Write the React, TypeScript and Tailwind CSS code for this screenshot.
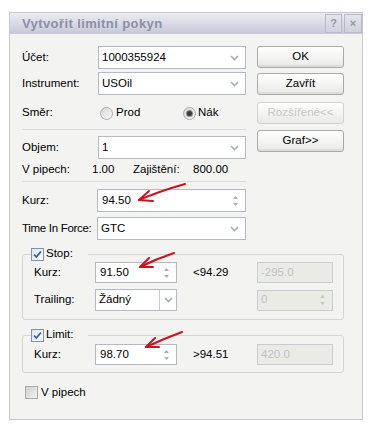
import React from "react";

function Chevron() {
  return (
    <svg width="9" height="6" viewBox="0 0 9 6">
      <path d="M1 1l3.5 3.5L8 1" fill="none" stroke="#a4abb4" strokeWidth="1.6" />
    </svg>
  );
}

function SpinArrows({ color = "#a8aeb6" }: { color?: string }) {
  return (
    <div className="flex flex-col items-center gap-[4px]">
      <svg width="5" height="3" viewBox="0 0 5 3">
        <path d="M0 3h5L2.5 0z" fill={color} />
      </svg>
      <svg width="5" height="3" viewBox="0 0 5 3">
        <path d="M0 0h5L2.5 3z" fill={color} />
      </svg>
    </div>
  );
}

function Combo({ value, className = "" }: { value: string; className?: string }) {
  return (
    <div className={`h-[23px] w-[148px] border border-[#b4bac3] bg-white flex items-center justify-between pl-[3px] pr-[6px] ${className}`}>
      <span>{value}</span>
      <Chevron />
    </div>
  );
}

function Spin({ value, w, h = 23 }: { value: string; w: string; h?: number }) {
  return (
    <div
      className={`${w} ${h === 23 ? "h-[23px]" : "h-[21px]"} border border-[#b4bac3] bg-white flex items-center justify-between pl-[4px] pr-[7px]`}
    >
      <span>{value}</span>
      <SpinArrows />
    </div>
  );
}

function Disabled({ value, spin = false }: { value: string; spin?: boolean }) {
  return (
    <div className="w-[76px] h-[21px] border border-[#c6ccd3] bg-[#ebebe6] flex items-center justify-between pl-[3px] pr-[7px] text-[#bfc2c6]">
      <span>{value}</span>
      {spin && <SpinArrows color="#c4c8cc" />}
    </div>
  );
}

function Button({ label, disabled = false }: { label: string; disabled?: boolean }) {
  return (
    <div
      className={`w-[87px] h-[22px] rounded-[3px] border flex items-center justify-center bg-linear-to-b from-white to-[#e9e9e6] ${
        disabled ? "border-[#d2d2d0] text-[#c6c6c6]" : "border-[#a9a9a7] text-black shadow-[inset_0_-2px_0_#dcdcd8]"
      }`}
    >
      {label}
    </div>
  );
}

function Radio({ checked = false }: { checked?: boolean }) {
  return (
    <div className="w-[13px] h-[13px] rounded-full border border-[#a8acb0] bg-linear-to-br from-[#d6d6d6] to-[#fafafa] flex items-center justify-center">
      {checked && <div className="w-[5px] h-[5px] rounded-full bg-[#3a3a3a] shadow-[0_0_0_1px_#8a8a8a]" />}
    </div>
  );
}

function Check({ checked = true }: { checked?: boolean }) {
  return (
    <div
      className={`w-[13px] h-[13px] border flex items-center justify-center ${
        checked ? "border-[#7d93b0] bg-linear-to-br from-[#dfe3ea] to-white" : "border-[#a9a9a9] bg-linear-to-br from-[#d0d0d0] to-[#f2f2f2]"
      }`}
    >
      {checked && (
        <svg width="9" height="9" viewBox="0 0 9 9">
          <path d="M1 4.5l2.3 2.5L8 1.5" fill="none" stroke="#2d5fae" strokeWidth="1.8" />
        </svg>
      )}
    </div>
  );
}

function Separator() {
  return <div className="h-px w-[224px] bg-[#dcdcd6]" />;
}

function Arrows() {
  return (
    <svg className="absolute left-0 top-0 pointer-events-none" width="371" height="426" viewBox="0 0 371 426">
      <g fill="none" stroke="#c8141c" strokeWidth="2" strokeLinecap="round">
        <path d="M185 184 Q160 191 139 200" />
        <path d="M139 200 L153 201 M139 200 L149 191" />
        <path d="M174 253 Q156 259 140 267" />
        <path d="M140 267 L153 267 M140 267 L149 258" />
        <path d="M182 332 Q163 339 146 347" />
        <path d="M146 347 L159 347 M146 347 L155 338" />
      </g>
    </svg>
  );
}

export default function App() {
  return (
    <div className="relative w-[371px] h-[426px] bg-white overflow-hidden font-['Liberation_Sans',Arial,sans-serif] text-[11.5px] text-black leading-none whitespace-nowrap">
      <div className="ml-[9px] mt-[12px] w-[354px] border border-[#c7c7c7] bg-[#f3f3f1]">
        {/* title bar */}
        <div className="h-[21px] flex items-center justify-between bg-linear-to-b from-[#ececf1] to-[#c6c8d7] pl-[12px]">
          <span className="font-bold text-[13px] tracking-[0.4px] text-[#8a8fa9]">Vytvořit limitní pokyn</span>
          <div className="flex gap-[2px] self-stretch pt-[1px] pb-[1px]">
            <div className="w-[17px] border border-[#b7b9c9] bg-linear-to-b from-[#e4e5ec] to-[#cfd0dc] flex items-center justify-center font-bold text-[11px] text-[#9296ad]">?</div>
            <div className="w-[18px] border border-[#b7b9c9] bg-linear-to-b from-[#e4e5ec] to-[#cfd0dc] flex items-center justify-center font-bold text-[11px] text-[#9296ad]">×</div>
          </div>
        </div>

        {/* body */}
        <div className="pt-[12px] pb-[20px]">
          <div className="flex pl-[12px]">
            <div className="flex flex-col w-[224px]">
              <div className="flex items-center">
                <span className="w-[76px]">Účet:</span>
                <Combo value="1000355924" />
              </div>
              <div className="flex items-center mt-[3px]">
                <span className="w-[76px]">Instrument:</span>
                <Combo value="USOil" />
              </div>
              <div className="flex items-center h-[24px] mt-[6px]">
                <span className="w-[78px]">Směr:</span>
                <Radio />
                <span className="ml-[3px] w-[67px]">Prod</span>
                <Radio checked />
                <span className="ml-[2px]">Nák</span>
              </div>
              <div className="mt-[4px]">
                <Separator />
              </div>
              <div className="flex items-center mt-[6px]">
                <span className="w-[76px]">Objem:</span>
                <Combo value="1" />
              </div>
              <div className="flex items-center h-[21px]">
                <span className="w-[70px]">V pipech:</span>
                <span className="w-[41px]">1.00</span>
                <span className="w-[60px]">Zajištění:</span>
                <span>800.00</span>
              </div>
              <div className="mt-[1px]">
                <Separator />
              </div>
              <div className="flex items-center mt-[7px]">
                <span className="w-[75px]">Kurz:</span>
                <Spin value="94.50" w="w-[149px]" />
              </div>
              <div className="flex items-center mt-[5px]">
                <span className="w-[75px] tracking-[-0.3px]">Time In Force:</span>
                <Combo value="GTC" className="w-[149px]" />
              </div>
            </div>
            <div className="flex flex-col ml-[11px]">
              <Button label="OK" />
              <div className="mt-[5px]">
                <Button label="Zavřít" />
              </div>
              <div className="mt-[7px]">
                <Button label="Rozšířené<<" disabled />
              </div>
              <div className="mt-[6px]">
                <Button label="Graf>>" />
              </div>
            </div>
          </div>

          {/* Stop */}
          <fieldset className="mt-[7px] ml-[12px] w-[322px] min-w-0 border border-[#d6d6cd] rounded-[3px] pl-[11px] pr-[10px] pb-[8px]">
            <legend className="-ml-[3px] w-[57px] h-[14px] flex items-center">
              <Check />
              <span className="ml-[2px]">Stop:</span>
            </legend>
            <div className="flex items-center mt-[1px]">
              <span className="w-[61px]">Kurz:</span>
              <Spin value="91.50" w="w-[82px]" h={21} />
              <span className="w-[80px] pl-[16px]">&lt;94.29</span>
              <Disabled value="-295.0" />
            </div>
            <div className="flex items-center mt-[6px]">
              <span className="w-[61px]">Trailing:</span>
              <div className="w-[82px] h-[22px] border border-[#b4bac3] bg-white flex items-center">
                <span className="flex-1 pl-[3px]">Žádný</span>
                <div className="w-[17px] h-full border-l border-[#c9ced4] flex items-center justify-center">
                  <Chevron />
                </div>
              </div>
              <span className="w-[80px]" />
              <Disabled value="0" spin />
            </div>
          </fieldset>

          {/* Limit */}
          <fieldset className="mt-[8px] ml-[12px] w-[322px] min-w-0 border border-[#d6d6cd] rounded-[3px] pl-[11px] pr-[10px] pb-[7px]">
            <legend className="-ml-[3px] w-[57px] h-[14px] flex items-center">
              <Check />
              <span className="ml-[2px]">Limit:</span>
            </legend>
            <div className="flex items-center mt-[2px]">
              <span className="w-[61px]">Kurz:</span>
              <Spin value="98.70" w="w-[82px]" h={21} />
              <span className="w-[80px] pl-[16px]">&gt;94.51</span>
              <Disabled value="420.0" />
            </div>
          </fieldset>

          <div className="flex items-center mt-[13px] ml-[15px]">
            <Check checked={false} />
            <span className="ml-[3px]">V pipech</span>
          </div>
        </div>
      </div>
      <Arrows />
    </div>
  );
}
